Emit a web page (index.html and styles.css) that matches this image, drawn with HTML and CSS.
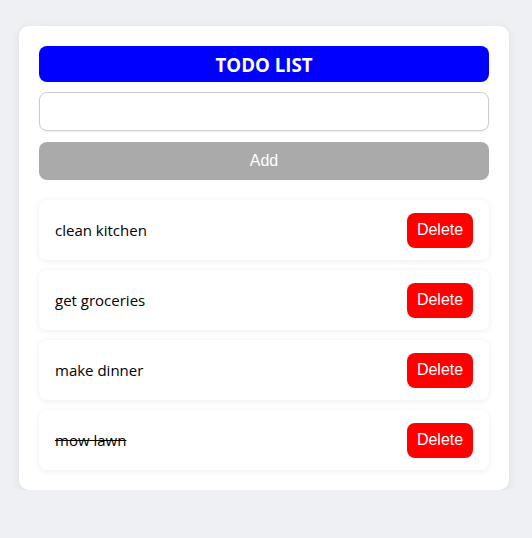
FILE: index.html
```html
<!DOCTYPE html>
<html>
<head>
<meta charset="utf-8">
<link rel="stylesheet" href="styles.css">
</head>
<body>
<div class="page">
  <div class="card">
    <h1 class="title">TODO LIST</h1>
    <input class="field" type="text">
    <button class="add">Add</button>
    <ul class="list">
      <li class="item"><span class="text">clean kitchen</span><button class="del">Delete</button></li>
      <li class="item"><span class="text">get groceries</span><button class="del">Delete</button></li>
      <li class="item"><span class="text">make dinner</span><button class="del">Delete</button></li>
      <li class="item"><span class="text done">mow lawn</span><button class="del">Delete</button></li>
    </ul>
  </div>
</div>
</body>
</html>
```

FILE: styles.css
```css
html, body {
  margin: 0;
  padding: 0;
  background: #eff0f4;
}
.page {
  padding: 26px 23px 0 19px;
}
.card {
  background: #fff;
  border-radius: 10px;
  padding: 20px;
  box-shadow: 0 2px 10px rgba(0,0,0,0.08);
  display: flex;
  flex-direction: column;
  font-family: "Open Sans", "Noto Sans", sans-serif;
}
.title {
  margin: 0;
  height: 36px;
  background: #0000ff;
  color: #fff;
  border-radius: 8px;
  font-size: 18.7px;
  font-weight: 700;
  display: flex;
  align-items: center;
  justify-content: center;
  padding-top: 1px;
  box-sizing: border-box;
}
.field {
  margin-top: 10px;
  height: 39px;
  box-sizing: border-box;
  border: 1px solid #cccccc;
  border-radius: 8px;
  box-shadow: 0 1px 3px rgba(0,0,0,0.06);
  outline: none;
}
.add {
  margin-top: 11px;
  height: 38px;
  border: none;
  border-radius: 8px;
  background: #aaaaaa;
  color: #fff;
  font-family: "Liberation Sans", Arial, sans-serif;
  font-size: 16px;
}
.list {
  list-style: none;
  margin: 20px 0 0;
  padding: 0;
  display: flex;
  flex-direction: column;
  gap: 10px;
}
.item {
  height: 60px;
  box-sizing: border-box;
  padding: 0 16px;
  border-radius: 8px;
  background: #fff;
  box-shadow: 0 1px 6px rgba(0,0,0,0.08);
  display: flex;
  align-items: center;
  justify-content: space-between;
}
.text {
  font-size: 15px;
  color: #000;
}
.done {
  text-decoration: line-through;
}
.del {
  width: 66px;
  height: 35px;
  border: none;
  border-radius: 8px;
  background: #ff0000;
  color: #fff;
  font-family: "Liberation Sans", Arial, sans-serif;
  font-size: 16px;
  padding: 0;
}
```
